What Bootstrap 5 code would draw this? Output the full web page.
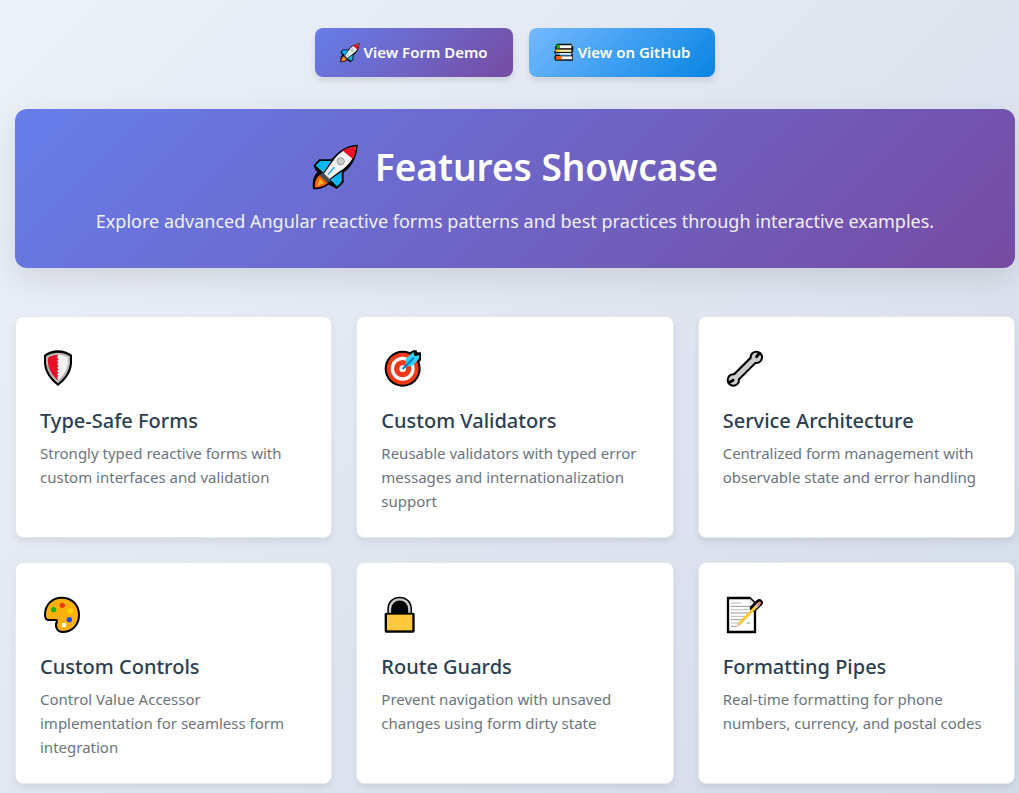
<!DOCTYPE html>
<html lang="en">
<head>
<meta charset="utf-8">
<meta name="viewport" content="width=device-width, initial-scale=1">
<title>Features Showcase</title>
<link href="https://cdn.jsdelivr.net/npm/bootstrap@5.3.0/dist/css/bootstrap.min.css" rel="stylesheet">
<style>
body{font-family:"Noto Sans","Open Sans",sans-serif;font-size:15px;line-height:24px;color:#2c3e50;background:linear-gradient(135deg,#edf1f8,#d3dbe9);min-height:100vh}
.page{padding:28px 4px 9px 15px}
.demo-btn{--bs-btn-color:#fff;--bs-btn-hover-color:#fff;--bs-btn-font-size:15px;--bs-btn-font-weight:600;--bs-btn-border-width:0;--bs-btn-padding-y:12px;--bs-btn-padding-x:25px;--bs-btn-border-radius:8px;line-height:25px;box-shadow:0 4px 6px rgba(0,0,0,.1)}
.fill-violet{background:linear-gradient(135deg,#667eea,#764ba2)}
.fill-blue{background:linear-gradient(135deg,#74b9ff,#0984e3)}
.hero{border-radius:12px;padding:32px;box-shadow:0 10px 30px rgba(0,0,0,.1)}
.hero h1{font-size:37px;line-height:52px;font-weight:600;margin-bottom:14px;gap:16px}
.hero p{font-size:18px;line-height:29px;opacity:.9}
.feature{border:1px solid #e3e8ee;border-radius:8px;padding:24px;box-shadow:0 4px 6px rgba(0,0,0,.07)}
.feature svg{width:44px;height:51px;margin-bottom:16px}
.feature h2{font-size:20px;line-height:25px;font-weight:500;margin-bottom:8px}
.feature p{color:#6c757d}
</style>
</head>
<body>
<svg class="d-none" aria-hidden="true">
  <symbol id="rocket" viewBox="46 40 144 144">
    <path d="M186 42C158 43 132 57 113 79L104 87 68 87 51 105 57 121 64 125C50 137 47 154 49 179 68 179 84 175 97 164L122 178 143 158 143 127C165 112 185 83 186 42Z" fill="#000"/>
    <path d="M180 48C151 50 127 68 110 93L75 141 89 155 132 123C159 107 178 82 180 48Z" fill="#f2f2f2"/>
    <path d="M180 48C164 49 150 54 140 61L171 86C177 76 180 63 180 48Z" fill="#e81224"/>
    <path d="M105 92H71L57 106 81 128ZM137 125V155L123 170 102 149Z" fill="#00b7f1"/>
    <path d="M115 111 95 134" stroke="#00a4e4" stroke-width="4"/>
    <path d="M80 127 104 151 94 160 69 136Z" fill="#484c50"/>
    <path d="M69 136 94 160C82 170 69 173 55 173 54 158 57 145 69 136Z" fill="#f7630c"/>
    <path d="M70 146 83 160 62 168Z" fill="#ffb02e"/>
    <circle cx="134" cy="93" r="11" fill="#ccc" stroke="#999" stroke-width="3"/>
  </symbol>
</svg>
<main class="page container-fluid">
  <div class="d-flex flex-wrap justify-content-center gap-3 mb-4 pb-2">
    <a href="#features" class="btn demo-btn fill-violet d-inline-flex align-items-center">
      <svg class="me-1" width="20" height="20" aria-hidden="true"><use href="#rocket"/></svg>
      <span>View Form Demo</span></a>
    <a href="#" class="btn demo-btn fill-blue d-inline-flex align-items-center">
      <svg class="me-1" width="20" height="20" viewBox="30 15 54 54" aria-hidden="true">
        <path d="M38 17H78V23H82V37L79 42 81 46V63H34L31 58V51L35 46 31 43V37L34 33 32 27Z" fill="#111"/>
        <path d="M37 20H46V30H37Z" fill="#16b31c"/><path d="M46 21H77V29H46Z" fill="#f5f5f5"/>
        <path d="M36 33H77V39H36Z" fill="#ffe8a1"/><path d="M34 33H44V38H34Z" fill="#fcb714"/>
        <path d="M35 42H46V47H35ZM46 45H76V49H46Z" fill="#55b8f3"/><path d="M45 42H77V46H45Z" fill="#e7edf2"/>
        <path d="M35 50H50V60H35Z" fill="#f7630c"/><path d="M50 51H79V59H50Z" fill="#f5f5f5"/>
      </svg>
      <span>View on GitHub</span></a>
  </div>

  <header class="hero fill-violet text-white text-center mb-5">
    <h1 class="d-flex justify-content-center align-items-center">
      <svg width="47" height="47" aria-hidden="true"><use href="#rocket"/></svg>
      <span>Features Showcase</span>
    </h1>
    <p class="mb-0">Explore advanced Angular reactive forms patterns and best practices through interactive examples.</p>
  </header>

  <section id="features" class="row row-cols-1 row-cols-md-3 g-4">
    <div class="col"><article class="card feature h-100">
      <svg viewBox="30 3 132 153" aria-hidden="true">
        <path d="M84 31C99 31 115 37 126 45V70C124 98 108 120 84 138 60 120 44 98 42 70V45C53 37 69 31 84 31Z"/>
        <path d="M84 38C98 38 110 42 120 49V70C117 95 104 114 84 130 64 114 51 95 48 70V49C58 42 70 38 84 38Z" fill="#b8b8b8"/>
        <path d="M84 44C96 44 106 48 114 53V70C111 91 101 107 84 121Z" fill="#f2f2f2"/>
        <path d="M84 44C72 44 62 48 54 53V70C57 91 67 107 84 121V116L80 112 86 108 80 103 86 98 80 93 86 88 80 83 86 78 80 73 86 68 80 63 86 58 80 53Z" fill="#e81224"/>
      </svg>
      <h2>Type-Safe Forms</h2>
      <p class="mb-0">Strongly typed reactive forms with custom interfaces and validation</p>
    </article></div>

    <div class="col"><article class="card feature h-100">
      <svg viewBox="28 3 132 153" aria-hidden="true">
        <circle cx="93" cy="86" r="54"/><path d="M103 43 125 31 135 31 136 37 148 37V60L133 78Z"/>
        <circle cx="93" cy="86" r="48" fill="#f03a17"/>
        <circle cx="93" cy="86" r="31" fill="none" stroke="#fff" stroke-width="10"/>
        <circle cx="93" cy="86" r="10" fill="#fff"/>
        <path d="M102 79V57L125 36 129 49 143 45 141 58 121 79Z" fill="#31d2f7"/>
        <path d="M93 87 126 54" stroke="#0078d4" stroke-width="6"/>
      </svg>
      <h2>Custom Validators</h2>
      <p class="mb-0">Reusable validators with typed error messages and internationalization support</p>
    </article></div>

    <div class="col"><article class="card feature h-100">
      <svg viewBox="27 3 132 153" aria-hidden="true">
        <path d="M58 120 127 51" stroke="#000" stroke-width="27"/>
        <circle cx="58" cy="120" r="20"/><circle cx="127" cy="52" r="20"/>
        <circle cx="58" cy="120" r="14" fill="#ccc"/><circle cx="127" cy="52" r="14" fill="#ccc"/>
        <path d="M61 117 124 55" stroke="#ccc" stroke-width="15"/>
        <path d="M57 121 47 127M128 50 135 41" stroke="#000" stroke-width="9" stroke-linecap="round"/>
      </svg>
      <h2>Service Architecture</h2>
      <p class="mb-0">Centralized form management with observable state and error handling</p>
    </article></div>

    <div class="col"><article class="card feature h-100">
      <svg viewBox="30 6 132 153" aria-hidden="true">
        <path d="M95 38C127 38 147 61 147 90 147 120 126 141 98 141 81 141 73 124 81 109 82 105 79 104 72 105H55C47 104 45 97 45 89 45 59 67 38 95 38Z" fill="#ffb10a" stroke="#000" stroke-width="6"/>
        <circle cx="71" cy="74" r="8" fill="#16b31c"/><circle cx="97" cy="61" r="8" fill="#f03a17"/>
        <circle cx="121" cy="78" r="8" fill="#ffd800"/><circle cx="118" cy="104" r="8" fill="#144bff"/>
        <circle cx="102" cy="120" r="7" fill="#fff"/>
      </svg>
      <h2>Custom Controls</h2>
      <p class="mb-0">Control Value Accessor implementation for seamless form integration</p>
    </article></div>

    <div class="col"><article class="card feature h-100">
      <svg viewBox="28 6 132 153" aria-hidden="true">
        <path d="M47 87V72C47 49 63 35 84 35S121 49 121 72V87Z"/>
        <path d="M55 89V73C55 55 67 43 84 43S113 55 113 73V89" fill="#000" stroke="#ccc" stroke-width="7"/>
        <rect x="39" y="83" width="90" height="60" rx="5"/><rect x="46" y="89" width="76" height="47" fill="#ffc83d"/>
      </svg>
      <h2>Route Guards</h2>
      <p class="mb-0">Prevent navigation with unsaved changes using form dirty state</p>
    </article></div>

    <div class="col"><article class="card feature h-100">
      <svg viewBox="27 6 132 153" aria-hidden="true">
        <path d="M42 39H107L123 55V141H42Z" fill="#fff" stroke="#000" stroke-width="7"/>
        <path d="M107 40V54H121" fill="#ddd"/>
        <path d="M51 54H82M51 74H105M51 94H99M51 114H85" stroke="#bbb" stroke-width="3"/>
        <path d="M51 64H112M51 84H103M51 104H90M98 114H109M51 124H68" stroke="#999" stroke-width="3"/>
        <path d="M118 70 136 53" stroke="#000" stroke-width="21" stroke-linecap="round"/>
        <path d="M76 116 133 58" stroke="#ffc83d" stroke-width="9"/>
        <path d="M125 66 134 57" stroke="#ccc" stroke-width="9"/>
        <path d="M132 59 137 54" stroke="#f28b82" stroke-width="9" stroke-linecap="round"/>
        <path d="M73 113 67 127 80 120Z" fill="#f3b998"/>
      </svg>
      <h2>Formatting Pipes</h2>
      <p class="mb-0">Real-time formatting for phone numbers, currency, and postal codes</p>
    </article></div>
  </section>
</main>
<script src="https://cdn.jsdelivr.net/npm/bootstrap@5.3.0/dist/js/bootstrap.bundle.min.js"></script>
</body>
</html>
